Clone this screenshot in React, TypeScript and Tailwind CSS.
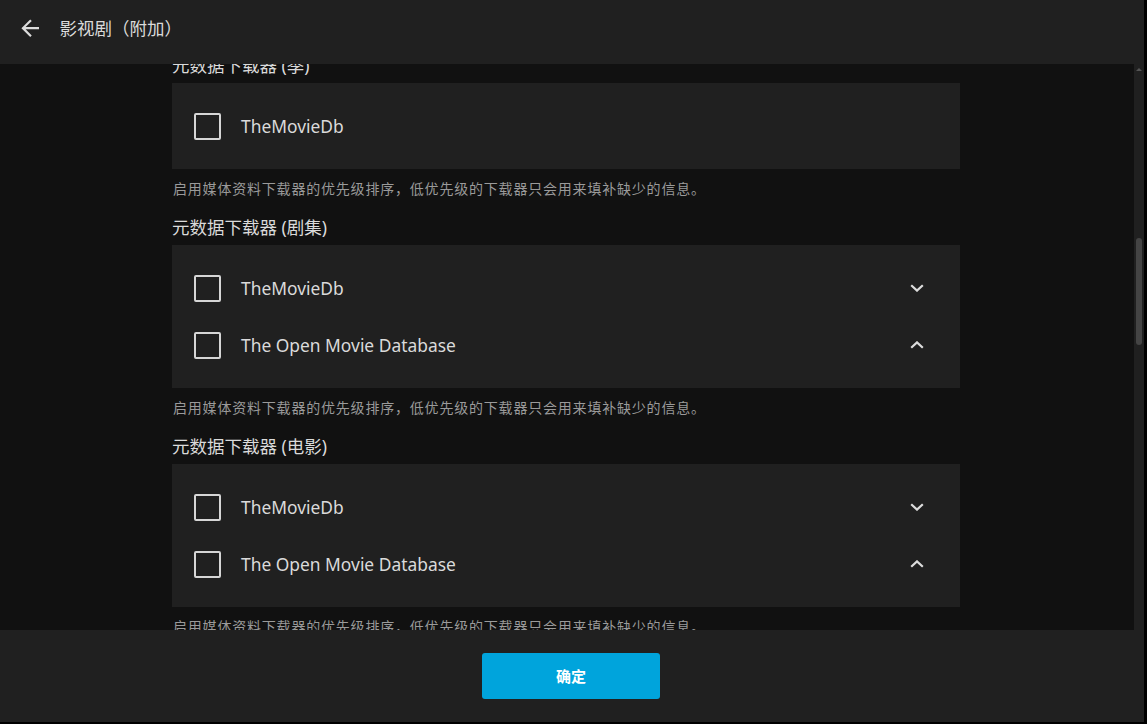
import React from "react";

const FONT = { fontFamily: '"Noto Sans", "Noto Sans CJK SC", sans-serif' };

function Chevron({ up }: { up?: boolean }) {
  return (
    <svg width="14" height="8" viewBox="0 0 14 8" className={up ? "rotate-180" : ""}>
      <path d="M1.2 1.2L7 6.6l5.8-5.4" fill="none" stroke="#dcdcdc" strokeWidth="2.2" />
    </svg>
  );
}

function Row({ label, arrow }: { label: string; arrow?: "up" | "down" }) {
  return (
    <div className="flex h-[57px] items-center pl-[22px] pr-[36px]">
      <div className="h-[27px] w-[27px] rounded-[2px] border-2 border-[#d6d6d6]" />
      <span className="ml-[20px] flex-1 text-[17.4px] text-[#dadada]">{label}</span>
      {arrow && <Chevron up={arrow === "up"} />}
    </div>
  );
}

function Section({ title, rows }: { title: string; rows: { label: string; arrow?: "up" | "down" }[] }) {
  return (
    <div>
      <div className="h-[24px] text-[17.5px] leading-[24px] text-[#dadada]">{title}</div>
      <div className="mt-[6px] bg-[#202020] py-[14.5px]">
        {rows.map((r, i) => (
          <Row key={i} label={r.label} arrow={r.arrow} />
        ))}
      </div>
      <div className="mt-[10px] mb-[16px] h-[20px] pl-[1px] text-[14px] leading-[20px] tracking-[0.8px] text-[#9a9a9a]">
        启用媒体资料下载器的优先级排序，低优先级的下载器只会用来填补缺少的信息。
      </div>
    </div>
  );
}

export default function App() {
  return (
    <div className="h-[724px] w-[1147px] bg-black" style={FONT}>
      <div className="flex h-[722px] w-[1144px] flex-col bg-[#111111]">
        <div className="flex h-[64px] shrink-0 items-center bg-[#202020] pb-[8px]">
          <svg width="26.4" height="26.4" viewBox="0 0 24 24" className="ml-[17px]">
            <path d="M20 11H7.83l5.59-5.59L12 4l-8 8 8 8 1.41-1.41L7.83 13H20v-2z" fill="#dcdcdc" />
          </svg>
          <span className="ml-[16px] text-[17.5px] text-[#dadada]">影视剧（附加）</span>
        </div>
        <div className="flex min-h-0 flex-1">
          <div className="flex min-w-0 flex-1 justify-center overflow-hidden pr-[2px]">
            <div className="-mt-[11px] w-[788px]">
              <Section title="元数据下载器 (季)" rows={[{ label: "TheMovieDb" }]} />
              <Section
                title="元数据下载器 (剧集)"
                rows={[
                  { label: "TheMovieDb", arrow: "down" },
                  { label: "The Open Movie Database", arrow: "up" },
                ]}
              />
              <Section
                title="元数据下载器 (电影)"
                rows={[
                  { label: "TheMovieDb", arrow: "down" },
                  { label: "The Open Movie Database", arrow: "up" },
                ]}
              />
            </div>
          </div>
          <div className="flex w-[10px] shrink-0 flex-col items-center bg-[#202020]">
            <div className="mt-[4px] h-0 w-0 border-x-[3px] border-b-[3px] border-x-transparent border-b-[#555]" />
            <div className="mt-[167px] h-[107px] w-[6px] rounded-[3px] bg-[#444444]" />
          </div>
        </div>
        <div className="flex h-[92px] shrink-0 items-start justify-center bg-[#202020] pr-[2px] pt-[23px]">
          <button className="h-[46px] w-[178px] rounded-[3px] bg-[#00a4dc] text-[15px] font-bold text-white">
            确定
          </button>
        </div>
      </div>
    </div>
  );
}
